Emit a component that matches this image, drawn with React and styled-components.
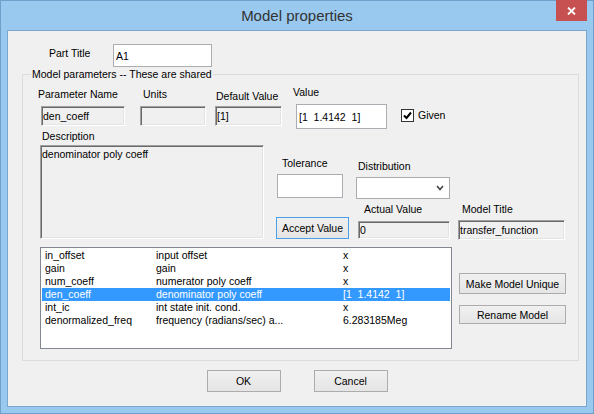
import React from "react";
import styled, { createGlobalStyle } from "styled-components";

const Global = createGlobalStyle`
  html, body { margin: 0; padding: 0; background: #99c9ef; }
  * { box-sizing: border-box; }
`;

const Window = styled.div`
  width: 594px;
  height: 414px;
  background: #99c9ef;
  border: 1px solid #6f9fca;
  padding: 0 6px 6px 6px;
  display: flex;
  flex-direction: column;
  font-family: "Liberation Sans", Arial, sans-serif;
  font-size: 10.5px;
  color: #000;
`;

const TitleBar = styled.div`
  position: relative;
  height: 29px;
  flex: none;
  display: flex;
  align-items: center;
  justify-content: center;
  font-size: 15px;
  color: #333;
`;

const CloseButton = styled.div`
  position: absolute;
  top: -1px;
  right: 0;
  width: 31px;
  height: 21px;
  background: #c75050;
  display: flex;
  align-items: center;
  justify-content: center;
`;

const Client = styled.div`
  flex: 1;
  border: 1px solid #7aa6cf;
  background: #f0f0f0;
  display: flex;
  flex-direction: column;
`;

const PartRow = styled.div`
  display: flex;
  align-items: flex-start;
  margin-top: 13px;
  padding-left: 41px;
`;

const PartLabel = styled.div`
  width: 64px;
  line-height: 18px;
`;

const EditBox = styled.div`
  width: ${(p) => p.$w}px;
  height: ${(p) => p.$h}px;
  border: 1px solid #abadb3;
  background: #fff;
  padding: 0 2px;
  display: flex;
  align-items: center;
  white-space: pre;
  margin-top: ${(p) => p.$gap || 0}px;
  margin-left: ${(p) => p.$indent || 0}px;
`;

const GroupBox = styled.div`
  position: relative;
  margin: 7px 7px 0 14px;
  border: 1px solid #dcdcdc;
  padding-bottom: 11px;
`;

const GroupLabel = styled.div`
  position: absolute;
  top: -7px;
  left: 8px;
  padding: 0 1px;
  background: #f0f0f0;
  line-height: 13px;
`;

const Row = styled.div`
  display: flex;
  align-items: flex-start;
  padding-left: ${(p) => p.$pad || 0}px;
  margin-top: ${(p) => p.$top || 0}px;
`;

const Column = styled.div`
  display: flex;
  flex-direction: column;
  margin-left: ${(p) => p.$left || 0}px;
  margin-top: ${(p) => p.$top || 0}px;
`;

const Field = styled.div`
  display: flex;
  flex-direction: column;
  align-items: flex-start;
  margin-left: ${(p) => p.$left || 0}px;
  margin-top: ${(p) => p.$top || 0}px;
`;

const FieldLabel = styled.div`
  height: 13px;
  line-height: 13px;
  white-space: nowrap;
  padding-left: ${(p) => p.$indent || 0}px;
`;

const SunkenBox = styled.div`
  width: ${(p) => p.$w}px;
  height: ${(p) => p.$h}px;
  margin-top: ${(p) => p.$gap || 0}px;
  margin-left: ${(p) => p.$indent || 0}px;
  border: 1px solid;
  border-color: #a0a0a0 #ffffff #ffffff #a0a0a0;
  box-shadow: inset 1px 1px 0 #696969, inset -1px -1px 0 #e3e3e3;
  background: #f0f0f0;
  padding: ${(p) => (p.$multi ? "2px 1px 0 1px" : "0 1px")};
  display: flex;
  align-items: ${(p) => (p.$multi ? "flex-start" : "center")};
  line-height: 13px;
  white-space: pre;
`;

const CheckWrap = styled.label`
  display: flex;
  align-items: center;
  gap: 4px;
  margin-left: 14px;
  margin-top: 34px;
  line-height: 13px;
`;

const CheckBox = styled.div`
  width: 13px;
  height: 13px;
  border: 1px solid #333;
  background: #fff;
  display: flex;
  align-items: center;
  justify-content: center;
`;

const Select = styled.div`
  width: 94px;
  height: 22px;
  margin-top: 4px;
  border: 1px solid #acacac;
  background: #fff;
  display: flex;
  align-items: center;
  justify-content: flex-end;
  padding-right: 5px;
`;

const Button = styled.div`
  width: ${(p) => p.$w}px;
  height: ${(p) => p.$h}px;
  margin-top: ${(p) => p.$top || 0}px;
  border: 1px solid ${(p) => (p.$default ? "#4a9fe6" : "#acacac")};
  background: linear-gradient(#f0f0f0, #e5e5e5);
  display: flex;
  align-items: center;
  justify-content: center;
  white-space: nowrap;
`;

const ListBox = styled.div`
  width: 412px;
  height: 102px;
  margin-left: 17px;
  margin-top: 7px;
  border: 1px solid #828790;
  background: #fff;
  padding: 1px;
`;

const ListRow = styled.div`
  display: flex;
  height: 13px;
  line-height: 13px;
  padding-left: 3px;
  white-space: pre;
  background: ${(p) => (p.$selected ? "#3399ff" : "transparent")};
  color: ${(p) => (p.$selected ? "#fff" : "#000")};
`;

const Cell = styled.div`
  width: ${(p) => (p.$w ? `${p.$w}px` : "auto")};
  flex: ${(p) => (p.$w ? "none" : "1")};
  overflow: hidden;
`;

const SideButtons = styled.div`
  display: flex;
  flex-direction: column;
  gap: 11px;
  margin-left: 7px;
  margin-top: 33px;
`;

const Footer = styled.div`
  display: flex;
  justify-content: center;
  gap: 33px;
  margin-top: 9px;
`;

const rows = [
  ["in_offset", "input offset", "x"],
  ["gain", "gain", "x"],
  ["num_coeff", "numerator poly coeff", "x"],
  ["den_coeff", "denominator poly coeff", "[1  1.4142  1]", true],
  ["int_ic", "int state init. cond.", "x"],
  ["denormalized_freq", "frequency (radians/sec) a...", "6.283185Meg"],
];

export default function App() {
  return (
    <>
      <Global />
      <Window>
        <TitleBar>
          Model properties
          <CloseButton>
            <svg width="9" height="8" viewBox="0 0 9 8">
              <path d="M1 0.5 L8 7.5 M8 0.5 L1 7.5" stroke="#fff" strokeWidth="1.8" />
            </svg>
          </CloseButton>
        </TitleBar>
        <Client>
          <PartRow>
            <PartLabel>Part Title</PartLabel>
            <EditBox $w={99} $h={23}>A1</EditBox>
          </PartRow>
          <GroupBox>
            <GroupLabel>Model parameters -- These are shared</GroupLabel>
            <Row $pad={15}>
              <Field $top={13}>
                <FieldLabel>Parameter Name</FieldLabel>
                <SunkenBox $w={84} $h={20} $gap={5} $indent={3}>den_coeff</SunkenBox>
              </Field>
              <Field $top={13} $left={15}>
                <FieldLabel $indent={3}>Units</FieldLabel>
                <SunkenBox $w={66} $h={20} $gap={5} />
              </Field>
              <Field $top={15} $left={9}>
                <FieldLabel $indent={1}>Default Value</FieldLabel>
                <SunkenBox $w={67} $h={20} $gap={3}>[1]</SunkenBox>
              </Field>
              <Field $top={11} $left={11}>
                <FieldLabel>Value</FieldLabel>
                <EditBox $w={91} $h={25} $gap={5} $indent={3}>[1  1.4142  1]</EditBox>
              </Field>
              <CheckWrap>
                <CheckBox>
                  <svg width="9" height="9" viewBox="0 0 9 9">
                    <path d="M1 4.5 L3.5 7 L8 1.5" fill="none" stroke="#000" strokeWidth="2" />
                  </svg>
                </CheckBox>
                Given
              </CheckWrap>
            </Row>
            <Row>
              <Field $left={17} $top={1}>
                <FieldLabel $indent={2}>Description</FieldLabel>
                <SunkenBox $w={224} $h={94} $gap={2} $multi>denominator poly coeff</SunkenBox>
              </Field>
              <Column $left={12}>
                <Row>
                  <Field $left={1} $top={28}>
                    <FieldLabel $indent={5}>Tolerance</FieldLabel>
                    <EditBox $w={66} $h={24} $gap={4} />
                  </Field>
                  <Field $left={13} $top={31}>
                    <FieldLabel $indent={2}>Distribution</FieldLabel>
                    <Select>
                      <svg width="8" height="6" viewBox="0 0 8 6">
                        <path d="M1 1 L4 4.5 L7 1" fill="none" stroke="#444" strokeWidth="1.6" />
                      </svg>
                    </Select>
                  </Field>
                </Row>
                <Row>
                  <Button $w={73} $h={22} $top={18} $default>Accept Value</Button>
                  <Field $left={9} $top={4}>
                    <FieldLabel $indent={6}>Actual Value</FieldLabel>
                    <SunkenBox $w={92} $h={18} $gap={5}>0</SunkenBox>
                  </Field>
                  <Field $left={8} $top={4}>
                    <FieldLabel $indent={4}>Model Title</FieldLabel>
                    <SunkenBox $w={107} $h={20} $gap={4}>transfer_function</SunkenBox>
                  </Field>
                </Row>
              </Column>
            </Row>
            <Row>
              <ListBox>
                {rows.map(([a, b, c, sel]) => (
                  <ListRow key={a} $selected={sel}>
                    <Cell $w={111}>{a}</Cell>
                    <Cell $w={187}>{b}</Cell>
                    <Cell>{c}</Cell>
                  </ListRow>
                ))}
              </ListBox>
              <SideButtons>
                <Button $w={107} $h={21}>Make Model Unique</Button>
                <Button $w={107} $h={19}>Rename Model</Button>
              </SideButtons>
            </Row>
          </GroupBox>
          <Footer>
            <Button $w={74} $h={22}>OK</Button>
            <Button $w={74} $h={22}>Cancel</Button>
          </Footer>
        </Client>
      </Window>
    </>
  );
}
